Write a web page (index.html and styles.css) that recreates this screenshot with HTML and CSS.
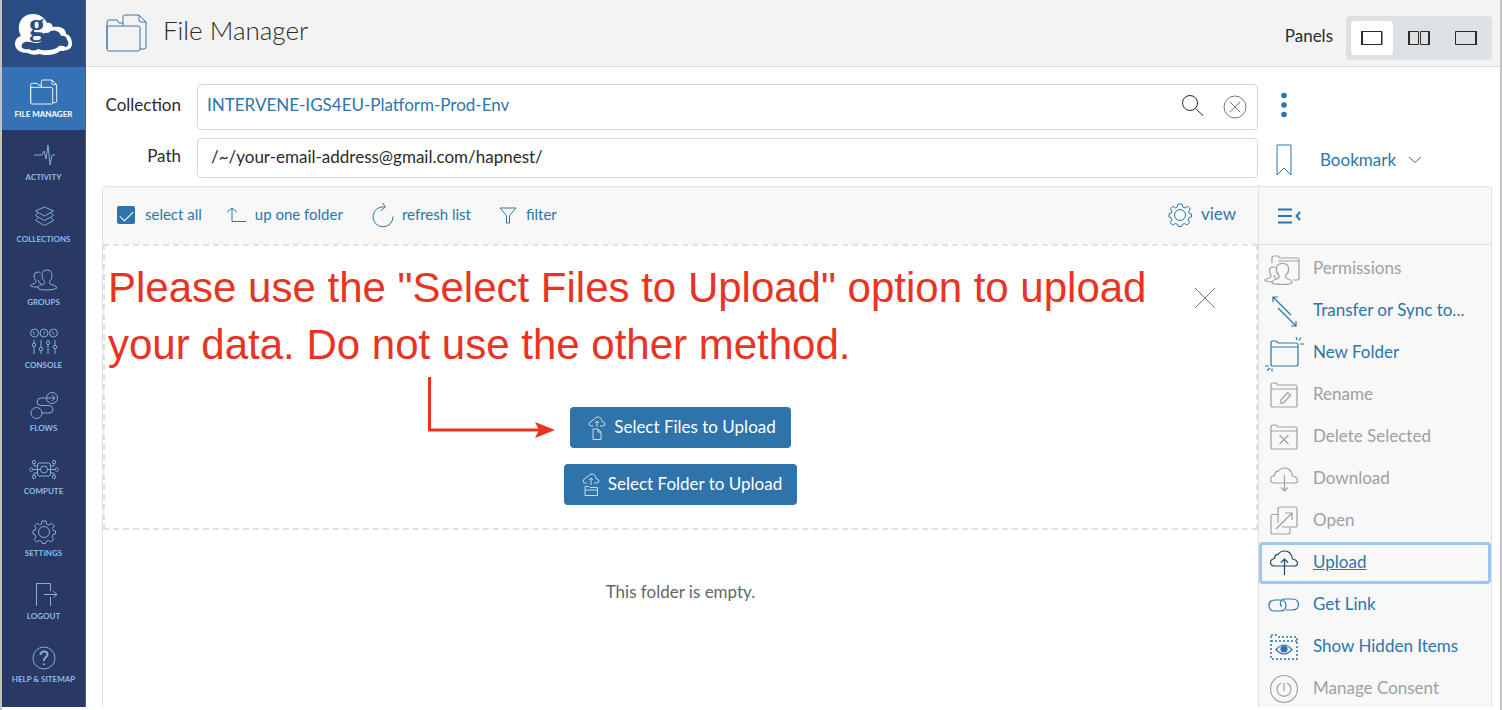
FILE: index.html
```html
<!DOCTYPE html>
<html lang="en">
<head>
<meta charset="utf-8">
<meta name="viewport" content="width=device-width, initial-scale=1">
<title>File Manager</title>
<link rel="stylesheet" href="styles.css">
</head>
<body>
<svg class="defs" aria-hidden="true">
  <symbol id="i-files" viewBox="0 0 42 38"><path d="M1 35V8q0-2 2-2h8l2 3h4M17 12V3q0-2 2-2h14l7 7v25q0 2-2 2h-4M33 1v5q0 2 2 2h5M1 12h31q2 0 2 2v21q0 2-2 2H3q-2 0-2-2z"/></symbol>
  <symbol id="i-gear" viewBox="0 0 24 24"><circle cx="12" cy="12" r="5.5"/><path d="M10 1h4l.6 3 2.4 1 2.6-1.8 2.7 2.7L20.600 8.500l1 2.200 1.900.300v3l-2.500.600-1 2.400 1.600 2.400-2.700 2.700-2.400-1.600-2.400 1-.600 2h-3.300l-.600-2-2.300-1-2.600 1.600-2.500-2.700L4 17l-1-2.400-2-.600v-3.300l2.200-.600L4 8 2.500 5.700 5 3.200 7.400 5l2-1z"/></symbol>
  <symbol id="i-folder" viewBox="0 0 30 30"><path d="M2 6.500V5q0-2 2-2h3l2 2h17q2 0 2 2v18q0 2-2 2H4q-2 0-2-2zM2 9h26"/></symbol>
  <symbol id="i-cloud" viewBox="0 0 30 30"><path d="M5 17q-3.500-.500-3.500-3.500t4-4Q6 5 9 5.500 11 2 16 2q6 0 7.500 8 5 1 5 4.500 0 2.500-3 2.500z"/></symbol>
</svg>
<div class="app">
  <aside class="sidebar">
    <a class="logo" href="#" aria-label="Home">
      <svg viewBox="15 4 58 56" width="58" height="56">
        <path fill="#fff" d="M21 34C16 25 20 12 33 12c7 0 12 4 14 9 2-1 5 0 6 4 7-1 13 1 13 7 4 1 6 5 6 10 0 5-5 7-12 7-4 4-15 5-20 3-5 1-9 1-12-1-7 0-13-3-13-9 0-4 2-7 6-8z"/>
        <path fill="#2b4d86" d="M23 41c3-3 11 0 15 0 4-1 4-3 4-5 0-4 3-6 6-5 5-5 12-2 13 3 3-1 6 1 6 4 2 2 2 6-1 7-4-1-6-2-8 0-5 4-15 4-20 2-3 2-6 2-9 0-5 1-10-1-6-6z"/>
        <text x="29" y="33" class="logo-g">g</text>
      </svg>
    </a>
    <nav class="nav" aria-label="Main">
      <a class="nav-item active" href="#"><svg width="28" height="26"><use href="#i-files" width="28" height="26" stroke-width="1.500"/></svg><span>FILE MANAGER</span></a>
      <a class="nav-item" href="#"><svg width="28" height="26" viewBox="0 0 28 26"><path d="M4 13h8l2-4 2 8 2-14 2 20 2-10h3"/></svg><span>ACTIVITY</span></a>
      <a class="nav-item" href="#"><svg width="28" height="26" viewBox="0 0 28 26"><path d="m14.500 3 9 4-9 5-9-5zM8 9l-2.500 2.500 9 5 9-5L21 9M8 14l-2.500 2.500 9 5 9-5L21 14"/></svg><span>COLLECTIONS</span></a>
      <a class="nav-item" href="#"><svg width="28" height="26" viewBox="0 0 28 26"><path d="M8 21q0-3 5-3.500 2-.500 1.500-3-3-2.500-2.500-7 .500-4.500 5-4.500t5 4.500q.500 4.500-2.500 7-.500 2.500 1.500 3 5 .500 6 3.500-2 2-10 2t-9-2zM10.500 5.500Q9.500 5 8 5 4 5 4 9q0 3 2 4.500.500 2-1.500 3Q1 17 .500 19 2.500 20.500 8 20M8.500 13q-.500 3 3 4"/></svg><span>GROUPS</span></a>
      <a class="nav-item" href="#"><svg width="28" height="28" viewBox="0 0 28 28"><circle cx="4.500" cy="5" r="4"/><circle cx="14" cy="5" r="4"/><circle cx="23.500" cy="5" r="4"/><path d="m3 3.500 1.500 3M15 3l-1.500 3.500M22 3.500l2 3M4 12v3m0 4v7M11 12v7m0 4v3M18 12v1m0 4v9M25 12v5m0 4v5"/><circle cx="4" cy="17" r="1.700"/><circle cx="11" cy="21" r="1.700"/><circle cx="18" cy="15" r="1.700"/><circle cx="25" cy="19" r="1.700"/></svg><span>CONSOLE</span></a>
      <a class="nav-item" href="#"><svg width="28" height="28" viewBox="0 0 28 28"><circle cx="22" cy="7" r="5.500"/><circle cx="6.500" cy="22" r="5.500"/><path d="M24.500 7H11q-4 0-4 4 0 3.500 4 3.500h8q4 0 4 4 0 3.500-4 3.500h-7M22 4l3 3-3 3"/></svg><span>FLOWS</span></a>
      <a class="nav-item" href="#"><svg width="30" height="26" viewBox="0 0 30 26"><rect x="8.500" y="7" width="13" height="13" rx="2"/><circle cx="15" cy="13.500" r="3.500"/><path d="M4 13.500h7.500m7 0H26M8.500 10H5V8m3.500 9H5v2m16.500-9H25V8m-3.500 9H25v2"/><circle cx="5" cy="6" r="1.700"/><circle cx="25" cy="6" r="1.700"/><circle cx="5" cy="21" r="1.700"/><circle cx="25" cy="21" r="1.700"/><circle cx="2.300" cy="13.500" r="1.700"/><circle cx="27.700" cy="13.500" r="1.700"/></svg><span>COMPUTE</span></a>
      <a class="nav-item" href="#"><svg width="24" height="24"><use href="#i-gear" width="24" height="24"/></svg><span>SETTINGS</span></a>
      <a class="nav-item" href="#"><svg width="28" height="26" viewBox="0 0 28 26"><path d="M6.500 25V2.500h14V10m0 6v9M14 13.500h13M23.500 10.500l3.500 3-3.500 3"/></svg><span>LOGOUT</span></a>
      <a class="nav-item" href="#"><svg width="24" height="24" viewBox="0 0 24 24"><circle cx="12" cy="12" r="11"/><path class="bold" d="M8.500 9q0-3.500 3.500-3.500t3.500 3q0 1.500-2 3-1.500 1-1.500 3.500M12 17.500v1.500"/></svg><span>HELP &amp; SITEMAP</span></a>
    </nav>
  </aside>

  <main class="main">
    <header class="header">
      <svg class="title-icon" width="42" height="38"><use href="#i-files" width="42" height="38"/></svg>
      <h1>File Manager</h1>
      <span class="panels-label" id="panels">Panels</span>
      <div class="panels" role="group" aria-labelledby="panels">
        <button class="on" type="button" aria-label="One panel"><svg width="24" height="16" viewBox="0 0 24 16"><path d="M2 1.500h20v13H2M21.500 1v14"/><path class="thick" d="M2 1v14"/></svg></button>
        <button type="button" aria-label="Two panels"><svg width="24" height="16" viewBox="0 0 24 16"><path d="M2 1.500h9.500v13H2M13.500 1.500H22v13h-8.500z"/><path class="thick" d="M2 1v14M22 1v14"/></svg></button>
        <button type="button" aria-label="Right panel"><svg width="24" height="16" viewBox="0 0 24 16"><path d="M22 1.500H1.500v13H22"/><path class="thick" d="M22 1v14"/></svg></button>
      </div>
    </header>

    <div class="content">
      <form class="location">
        <label for="collection">Collection</label>
        <div class="field">
          <input id="collection" class="collection" type="text" value="INTERVENE-IGS4EU-Platform-Prod-Env">
          <button type="button" aria-label="Search"><svg width="24" height="24" viewBox="0 0 24 24"><circle cx="9" cy="8" r="7.500"/><path d="m14.500 13.500 7.500 7"/></svg></button>
          <button class="clear" type="button" aria-label="Clear"><svg width="24" height="24" viewBox="0 0 24 24"><circle cx="12" cy="12" r="11"/><path d="m7 7 10 10M17 7 7 17"/></svg></button>
        </div>
        <div class="side-tools more"><button type="button" aria-label="More"><svg width="20" height="28" viewBox="0 0 20 28" class="dots"><circle cx="10" cy="4.500" r="2.800"/><circle cx="10" cy="14" r="2.800"/><circle cx="10" cy="23.500" r="2.800"/></svg></button></div>
        <label for="path">Path</label>
        <div class="field short"><input id="path" type="text" value="/~/your-email-address@gmail.com/hapnest/"></div>
        <div class="side-tools bookmark"><svg width="20" height="34" viewBox="0 0 20 34"><path d="M3 2h14v30l-7-7-7 7z"/></svg><button type="button">Bookmark <svg width="14" height="8" viewBox="0 0 14 8"><path d="m1 1 6 5.500L13 1"/></svg></button></div>
      </form>

      <div class="browser">
        <section class="files">
          <div class="toolbar">
            <label class="check"><input type="checkbox" checked><span>select all</span></label>
            <button class="up" type="button"><svg width="20" height="18" viewBox="0 0 20 18"><path d="M6 2v13.500h14M1 6l5-4 5 4"/></svg><span>up one folder</span></button>
            <button class="refresh" type="button"><svg width="22" height="26" viewBox="0 0 22 26"><path d="M21 14.500a10 10 0 1 1-8-9.500M10.500 1l3 4-5 4"/></svg><span>refresh list</span></button>
            <button class="filter" type="button"><svg width="18" height="18" viewBox="0 0 18 18"><path d="M1 2h16l-6.500 7.500V17h-3V9.500z"/></svg><span>filter</span></button>
            <button class="view" type="button"><svg width="24" height="24"><use href="#i-gear" width="24" height="24"/></svg><span>view</span></button>
          </div>
          <div class="dropzone">
            <p class="note">Please use the "Select Files to Upload" option to upload<br>your data. Do not use the other method.</p>
            <svg class="arrow" width="128" height="64" viewBox="0 0 128 64"><path d="M2.500 1v53H112"/><path class="head" d="m108 46 20 8-20 8 4-8z"/></svg>
            <button class="close" type="button" aria-label="Close"><svg width="22" height="22" viewBox="0 0 22 22"><path d="m1 1 20 20M21 1 1 21"/></svg></button>
            <button class="upload" type="button"><svg width="18" height="24" viewBox="0 0 18 24"><path d="M5 10H3.500Q1 10 1 8t2.500-2.500Q4 3.500 6 3.500 7 1 10 1q3.500 0 4 4.500 3 .500 3 2.500t-2.500 2H12M9 11V5M7 7l2-2 2 2M5 13h5l3 3v7.500H5zM10 13v3h3"/></svg><span>Select Files to Upload</span></button>
            <button class="upload" type="button"><svg width="18" height="24" viewBox="0 0 18 24"><path d="M5 10H3.500Q1 10 1 8t2.500-2.500Q4 3.500 6 3.500 7 1 10 1q3.500 0 4 4.500 3 .500 3 2.500t-2.500 2H12M9 12V5M7 7l2-2 2 2M3 22.500v-9h4l1 1h7.500v8zM3 17h12.500"/></svg><span>Select Folder to Upload</span></button>
          </div>
          <p class="empty">This folder is empty.</p>
        </section>

        <aside class="actions">
          <div class="actions-head"><button type="button" aria-label="Collapse menu"><svg width="24" height="18" viewBox="0 0 24 18"><path d="M0 2.500h14M0 9h14M0 15.500h14M22 5l-3.500 4 3.500 4"/></svg></button></div>
          <ul>
            <li><button type="button" disabled><svg viewBox="0 0 30 30"><path d="M3 9V4q0-2 2-2h4l2 2h17q2 0 2 2v18q0 2-2 2h-4M9 7h21M3 29q0-3 5-4 2.500-.500 2-4-3-2-2.500-7Q8 9.500 13.500 9.500t6 4.500q.500 5-2.500 7-1 3.500 2 4 4 1 4 4-3 1.500-10 1.500T3 29zM6.500 13.500Q5.500 13 4 13q-3.500 0-3.500 3.500 0 3 1.500 4.500.500 2-1.500 3-4 .500-4.500 2.500Q-1.500 28 4 28M5 21q0 2.500 2 3.500"/></svg><span>Permissions</span></button></li>
            <li><button type="button"><svg viewBox="0 0 30 30"><path d="M4 6V1h5M4 1l18 18M9 12l18 18M27 25v5h-5"/></svg><span>Transfer or Sync to...</span></button></li>
            <li><button type="button"><svg viewBox="0 0 30 30"><path d="M2 5q0-2 2-2h3l2 2h18q2 0 2 2v19q0 2-2 2H4q-2 0-2-2zM2 9h27M28 2l-1-3M30 2.500l2-3M31 6h4M0 28h-4M1 30l-3 2.500M3 30.500v3"/></svg><span>New Folder</span></button></li>
            <li><button type="button" disabled><svg viewBox="0 0 30 30"><use href="#i-folder" width="30" height="30"/><path d="m12 20 6.500-7.500 3 2.500-6.500 7.500-3 1zM10.500 23v.500"/></svg><span>Rename</span></button></li>
            <li><button type="button" disabled><svg viewBox="0 0 30 30"><use href="#i-folder" width="30" height="30"/><path d="m10.500 13 9 9M19.500 13l-9 9"/></svg><span>Delete Selected</span></button></li>
            <li><button type="button" disabled><svg viewBox="0 0 30 30"><use href="#i-cloud" width="30" height="30" y="2"/><path d="M15.500 11v16M12 23.500l3.500 3.500 3.500-3.500"/></svg><span>Download</span></button></li>
            <li><button type="button" disabled><svg viewBox="0 0 30 30"><path d="M9 8.500H4q-2 0-2 2V26q0 2 2 2h15q2 0 2-2v-5M9 17V3q0-2 2-2h15q2 0 2 2v16q0 2-2 2H13M7 23 23 7M16 7h7v7"/></svg><span>Open</span></button></li>
            <li><button class="focused" type="button"><svg viewBox="0 0 30 30"><use href="#i-cloud" width="30" height="30" y="1"/><path d="M15.500 27V11M12 14.500l3.500-3.500 3.500 3.500"/></svg><span>Upload</span></button></li>
            <li><button type="button"><svg viewBox="0 0 30 30"><path d="M13 16.500q-2-1-1.500-4Q12.500 9 16 9h7q6.500 0 6.500 5.500T23 20h-6M6 10h5q6 0 6 5.500T11 21H6q-6 0-6-5.500T6 10z"/></svg><span>Get Link</span></button></li>
            <li><button type="button"><svg viewBox="0 0 30 30"><path stroke-dasharray="2 2" stroke-width="1.500" d="M2 3h6M9 5h19v22H2V3M2 9h26"/><path d="M7 17.500q8-9 16 0-8 9-16 0z"/><circle class="fill" cx="15" cy="17" r="3"/></svg><span>Show Hidden Items</span></button></li>
            <li><button type="button" disabled><svg viewBox="0 0 30 30"><circle cx="15" cy="15" r="13.500"/><path d="M15 9v8M12 9a7 7 0 1 0 6 0"/></svg><span>Manage Consent</span></button></li>
          </ul>
        </aside>
      </div>
    </div>
  </main>
</div>
</body>
</html>
```
FILE: styles.css
```css
* { box-sizing: border-box; }
body {
  margin: 0;
  height: 100vh;
  overflow: hidden;
  padding-bottom: 3px;
  border-left: 2px solid #c4c4be;
  border-right: 2px solid #c4c4c4;
  background: #fff;
  color: #2b2b2b;
  font: 17px/24px Lato, "Open Sans", sans-serif;
}
button, input { font: inherit; color: inherit; }
button { margin: 0; padding: 0; border: 0; background: none; display: inline-flex; align-items: center; }
button span, .check span { padding-bottom: 2px; }
svg { fill: none; stroke: currentColor; stroke-width: 1; flex: none; display: block; }
.defs { position: absolute; width: 0; height: 0; }
.app { display: flex; height: 100%; }

.sidebar { width: 84px; flex: none; display: flex; flex-direction: column; background: #2a3864; border-right: 1px solid #4d5b85; }
.logo { height: 67px; display: flex; align-items: center; justify-content: center; background: #2b4d86; }
.logo svg { stroke: none; overflow: visible; }
.logo-g { font: bold 31px "Liberation Serif", serif; fill: #2b4d86; }
.nav { flex: 1; display: flex; flex-direction: column; padding-bottom: 12px; }
.nav-item { flex: 1; display: flex; flex-direction: column; align-items: center; justify-content: flex-end; gap: 3px; padding-bottom: 10px; color: #8dbbe8; text-decoration: none; font-size: 8px; line-height: 12px; white-space: nowrap; }
.nav-item.active { background: #3572b5; color: #fff; }
.nav-item svg { opacity: 0.9; }
.nav-item span { font-weight: bold; }
.bold { stroke-width: 2; }

.main { flex: 1; min-width: 0; display: flex; flex-direction: column; }
.header { display: flex; align-items: center; height: 67px; flex: none; padding: 0 8px 0 20px; background: #f3f3f3; border-bottom: 1px solid #dde1e5; }
.title-icon { color: #3b76a8; }
h1 { margin: 0 auto 6px 15px; font-size: 26px; line-height: 32px; font-weight: 300; }
.panels-label { margin: 6px 13px 0 0; }
.panels { display: flex; margin-top: 9px; gap: 5px; padding: 5px; border-radius: 4px; background: #dee1e4; }
.panels button { width: 42px; height: 34px; justify-content: center; border-radius: 4px; }
.panels .on { background: #fff; }
.thick { stroke-width: 2; }

.content { flex: 1; min-height: 0; display: flex; flex-direction: column; padding: 17px 8px 0 16px; }
.location { display: grid; grid-template-columns: 79px 1fr 218px; column-gap: 16px; row-gap: 8px; align-items: center; margin-bottom: 8px; }
.location label { text-align: right; padding-bottom: 4px; }
.field { display: flex; align-items: center; gap: 18px; height: 46px; padding: 0 10px 0 9px; border: 1px solid #d3d8dc; border-radius: 4px; }
.field.short { height: 40px; padding-left: 13px; }
.field input { flex: 1; min-width: 0; height: 32px; padding: 0 0 4px; border: 0; background: none; outline: 0; }
.field .collection { color: #2b76ab; padding-bottom: 6px; }
.clear { color: #777; }
.side-tools { display: flex; align-items: center; color: #2b76ab; }
.more { padding-bottom: 4px; }
.dots { fill: currentColor; stroke: none; }
.bookmark { gap: 26px; padding-top: 4px; }
.bookmark button { gap: 12px; }

.browser { flex: 1; min-height: 0; display: grid; grid-template-columns: 1fr 233px; border: 1px solid #dde1e5; border-bottom: 0; border-radius: 4px 4px 0 0; overflow: hidden; }
.toolbar { display: flex; align-items: center; height: 57px; padding: 0 22px 2px 14px; background: #f8f8f8; color: #2b76ab; font-size: 15px; }
.toolbar label, .toolbar button { display: flex; align-items: center; }
.check { gap: 10px; }
.check input { appearance: none; width: 18px; height: 18px; margin: 0; border-radius: 2px; background: #2e73aa; display: grid; place-items: center; }
.check input::before { content: ""; width: 12px; height: 6px; border: solid #fff; border-width: 0 0 1px 1px; transform: rotate(-45deg); }
.up { margin-left: 24px; gap: 9px; }
.refresh { margin-left: 29px; gap: 8px; }
.filter { margin-left: 28px; gap: 9px; }
.view { margin-left: auto; gap: 9px; font-size: 17px; }

.dropzone { position: relative; display: flex; flex-direction: column; align-items: center; gap: 16px; padding: 161px 0 23px; border: 2px dashed #dfe2e5; }
.note { position: absolute; left: 3px; top: 13px; margin: 0; color: #e93323; font: 42px/57px "Liberation Sans", Arial, sans-serif; white-space: nowrap; }
.arrow { position: absolute; left: 322px; top: 130px; color: #e93323; stroke-width: 3; }
.arrow .head { fill: currentColor; stroke: none; }
.close { position: absolute; right: 40px; top: 41px; color: #777; }
.upload { height: 41px; gap: 8px; padding: 0 15px 0 18px; border-radius: 4px; background: #2e73aa; color: #fff; }
.upload svg { opacity: 0.75; }
.empty { margin: 50px 0 0; text-align: center; color: #666; }

.actions { background: #f8f8f8; border-left: 1px solid #dde1e5; color: #2b76ab; }
.actions-head { height: 58px; padding-left: 19px; display: flex; align-items: center; border-bottom: 1px solid #dde1e5; }
.actions-head svg { stroke-width: 2; }
.actions ul { margin: 0; padding: 3px 0 0; list-style: none; }
.actions li { height: 42px; }
.actions li button { width: 100%; height: 42px; padding-left: 10px; gap: 14px; }
.actions li svg { width: 30px; height: 30px; overflow: visible; stroke-width: 1.2; }
.actions button:disabled { color: #9da1a4; }
.actions .focused { border: 3px solid #9cc6f8; border-radius: 4px; padding-left: 7px; text-decoration: underline; }
.focused svg { color: #1c486b; }
.fill { fill: currentColor; }
```
